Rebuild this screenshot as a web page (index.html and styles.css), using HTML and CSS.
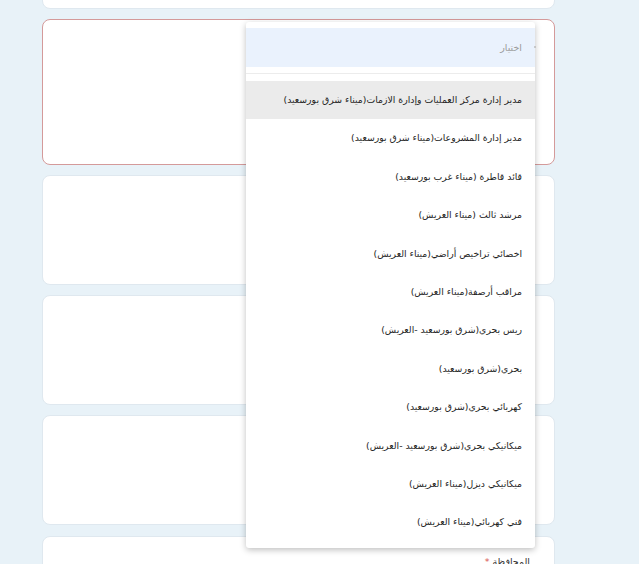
FILE: index.html
```html
<!DOCTYPE html>
<html lang="ar">
<head>
    <meta charset="UTF-8">
    <meta name="viewport" content="width=device-width, initial-scale=1.0">
    <title>نموذج التقديم</title>
    <link rel="stylesheet" href="styles.css">
</head>
<body>
    <div id="form">
        <div class="card card-top"></div>
        <div class="card card-error"></div>
        <div class="card card-mid"></div>
        <div class="card card-mid"></div>
        <div class="card card-mid"></div>
        <div class="card card-last">
            <div class="label">المحافظة <span class="req">*</span></div>
        </div>
    </div>

    <!-- open select list -->
    <div id="dropdown">
        <div class="search">اختيار</div>
        <span class="dot"></span>
        <div class="options">
            <div class="option active">مدير إدارة مركز العمليات وإدارة الازمات(ميناء شرق بورسعيد)</div>
            <div class="option">مدير إدارة المشروعات(ميناء شرق بورسعيد)</div>
            <div class="option">قائد قاطرة (ميناء غرب بورسعيد)</div>
            <div class="option">مرشد ثالث (ميناء العريش)</div>
            <div class="option">اخصائي تراخيص أراضي(ميناء العريش)</div>
            <div class="option">مراقب أرصفة(ميناء العريش)</div>
            <div class="option">ريس بحري(شرق بورسعيد -العريش)</div>
            <div class="option">بحري(شرق بورسعيد)</div>
            <div class="option">كهربائي بحري(شرق بورسعيد)</div>
            <div class="option">ميكانيكي بحري(شرق بورسعيد -العريش)</div>
            <div class="option">ميكانيكي ديزل(ميناء العريش)</div>
            <div class="option">فني كهربائي(ميناء العريش)</div>
        </div>
    </div>
</body>
</html>
```

FILE: styles.css
```css
body {
    background-color: #e8f2f8;
    font-family: "DejaVu Sans", Arial, sans-serif;
    margin: 0;
    padding: 0;
    height: 564px;
    overflow: hidden;
    position: relative;
}
#form {
    width: 513px;
    margin-left: 42px;
    margin-top: -92px; /* page is scrolled */
    display: flex;
    flex-direction: column;
    gap: 10px;
}
.card {
    background-color: white;
    border: 1px solid #dfe8ef;
    border-radius: 8px;
    box-sizing: border-box;
    direction: rtl;
}
.card-top {
    height: 101px;
}
.card-error {
    height: 146px;
    border-color: #d49a9a;
}
.card-mid {
    height: 110px;
}
.card-last {
    height: 120px;
    margin-top: 1px;
    padding: 19px 24px 0 0;
}
.label {
    font-size: 9.5px;
    color: #333;
}
.req {
    color: #d9534f;
}
#dropdown {
    position: absolute;
    left: 246px;
    top: 22px;
    width: 289px;
    height: 526px;
    background-color: white;
    border-radius: 3px;
    box-shadow: 0 2px 6px rgba(0,0,0,0.25);
    padding-top: 6px;
    box-sizing: border-box;
    direction: rtl;
}
.search {
    height: 39px;
    background-color: #eaf2fd;
    color: #9a9a9a;
    font-size: 9.5px;
    line-height: 39px;
    padding-right: 13px;
}
.dot {
    position: absolute;
    left: 288px;
    top: 24px;
    width: 2px;
    height: 2px;
    background-color: #bbb;
    border-radius: 50%;
}
.options {
    margin-top: 6px;
    border-top: 1px solid #ececec;
    padding-top: 7px;
}
.option {
    height: 38.4px;
    line-height: 38.4px;
    padding-right: 13px;
    font-size: 9.3px;
    color: #1e1e1e;
    white-space: nowrap;
}
.option.active {
    background-color: #ebebeb;
}
```
